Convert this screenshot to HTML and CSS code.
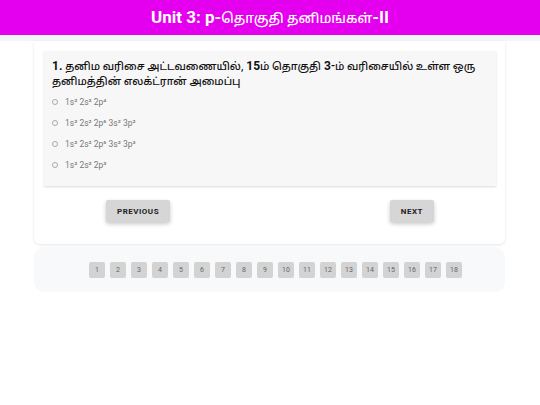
FILE: index.html
```html
<!DOCTYPE html>
<html lang="ta">
<head>
<meta charset="utf-8">
<link rel="stylesheet" href="styles.css">
</head>
<body>
<header class="topbar">Unit 3: p-<span class="ta-h">தொகுதி தனிமங்கள்</span>-II</header>
<div class="band"></div>
<main class="wrap">
  <section class="card">
    <div class="question">
      <p class="qtext"><b>1.</b> <span class="ta">தனிம வரிசை அட்டவணையில்,</span> <b>15</b><span class="ta">ம் தொகுதி</span> <b>3</b>-<span class="ta">ம் வரிசையில் உள்ள ஒரு தனிமத்தின் எலக்ட்ரான் அமைப்பு</span></p>
      <ul class="options">
        <li class="opt"><span class="radio"></span>1s² 2s² 2p⁴</li>
        <li class="opt"><span class="radio"></span>1s² 2s² 2p⁶ 3s² 3p²</li>
        <li class="opt"><span class="radio"></span>1s² 2s² 2p⁶ 3s² 3p³</li>
        <li class="opt"><span class="radio"></span>1s² 2s² 2p³</li>
      </ul>
    </div>
    <div class="actions">
      <button class="btn">PREVIOUS</button>
      <button class="btn">NEXT</button>
    </div>
  </section>
  <nav class="pager">
    <span class="pg">1</span><span class="pg">2</span><span class="pg">3</span><span class="pg">4</span><span class="pg">5</span><span class="pg">6</span><span class="pg">7</span><span class="pg">8</span><span class="pg">9</span><span class="pg">10</span><span class="pg">11</span><span class="pg">12</span><span class="pg">13</span><span class="pg">14</span><span class="pg">15</span><span class="pg">16</span><span class="pg">17</span><span class="pg">18</span>
  </nav>
</main>
</body>
</html>
```
FILE: styles.css
```css
* { box-sizing: border-box; }
html, body { margin: 0; padding: 0; background: #ffffff; }
body { font-family: Roboto, "Noto Sans", "Noto Sans Tamil", "Lohit Tamil", sans-serif; color: #222; }

.topbar {
  height: 35px;
  background: #e400ee;
  color: #ffffff;
  font-weight: 700;
  font-size: 17px;
  line-height: 35px;
  text-align: center;
}
.ta-h { font-size: 13.5px; font-weight: 500; }
.band { height: 6px; background: #f4f3f8; }

.wrap { padding: 0 35px 0 34px; }

.card {
  background: #ffffff;
  border-radius: 0 0 6px 6px;
  box-shadow: 0 1px 3px rgba(0,0,0,0.10);
  padding: 10px 9px 22px 10px;
}
.question {
  background: #f7f7f7;
  box-shadow: 0 1px 2px rgba(0,0,0,0.15);
  padding: 8px 8px 10px 8px;
  height: 135px;
}
.qtext {
  margin: 0;
  font-size: 12px;
  line-height: 14px;
  font-weight: 500;
  color: #111;
}
.qtext .ta { font-size: 10.6px; font-weight: 500; }
.qtext b { font-weight: 700; }
.options { list-style: none; margin: 2px 0 0 0; padding: 0; }
.opt {
  display: flex;
  align-items: center;
  height: 21px;
  font-size: 8.5px;
  color: #777;
}
.radio {
  width: 6px; height: 6px;
  border: 1px solid #aaa;
  border-radius: 50%;
  margin: 0 7px 0 0;
}

.actions {
  display: flex;
  justify-content: space-between;
  padding: 14px 62px 0 62px;
}
.btn {
  font-family: Roboto, sans-serif;
  font-size: 8px;
  font-weight: 700;
  letter-spacing: 0.5px;
  color: #222;
  background: #d6d6d6;
  border: none;
  border-radius: 2px;
  height: 22px;
  padding: 0 11px;
  box-shadow: 0 2px 4px rgba(0,0,0,0.22);
}

.pager {
  margin-top: 3px;
  background: #f8f9fb;
  border-radius: 10px;
  height: 45px;
  display: flex;
  justify-content: center;
  align-items: center;
  gap: 5px;
  padding-left: 12px;
}
.pg {
  width: 16px; height: 16px;
  background: #d3d3d3;
  border-radius: 2px;
  font-size: 7px;
  color: #666;
  display: flex;
  align-items: center;
  justify-content: center;
}
```
